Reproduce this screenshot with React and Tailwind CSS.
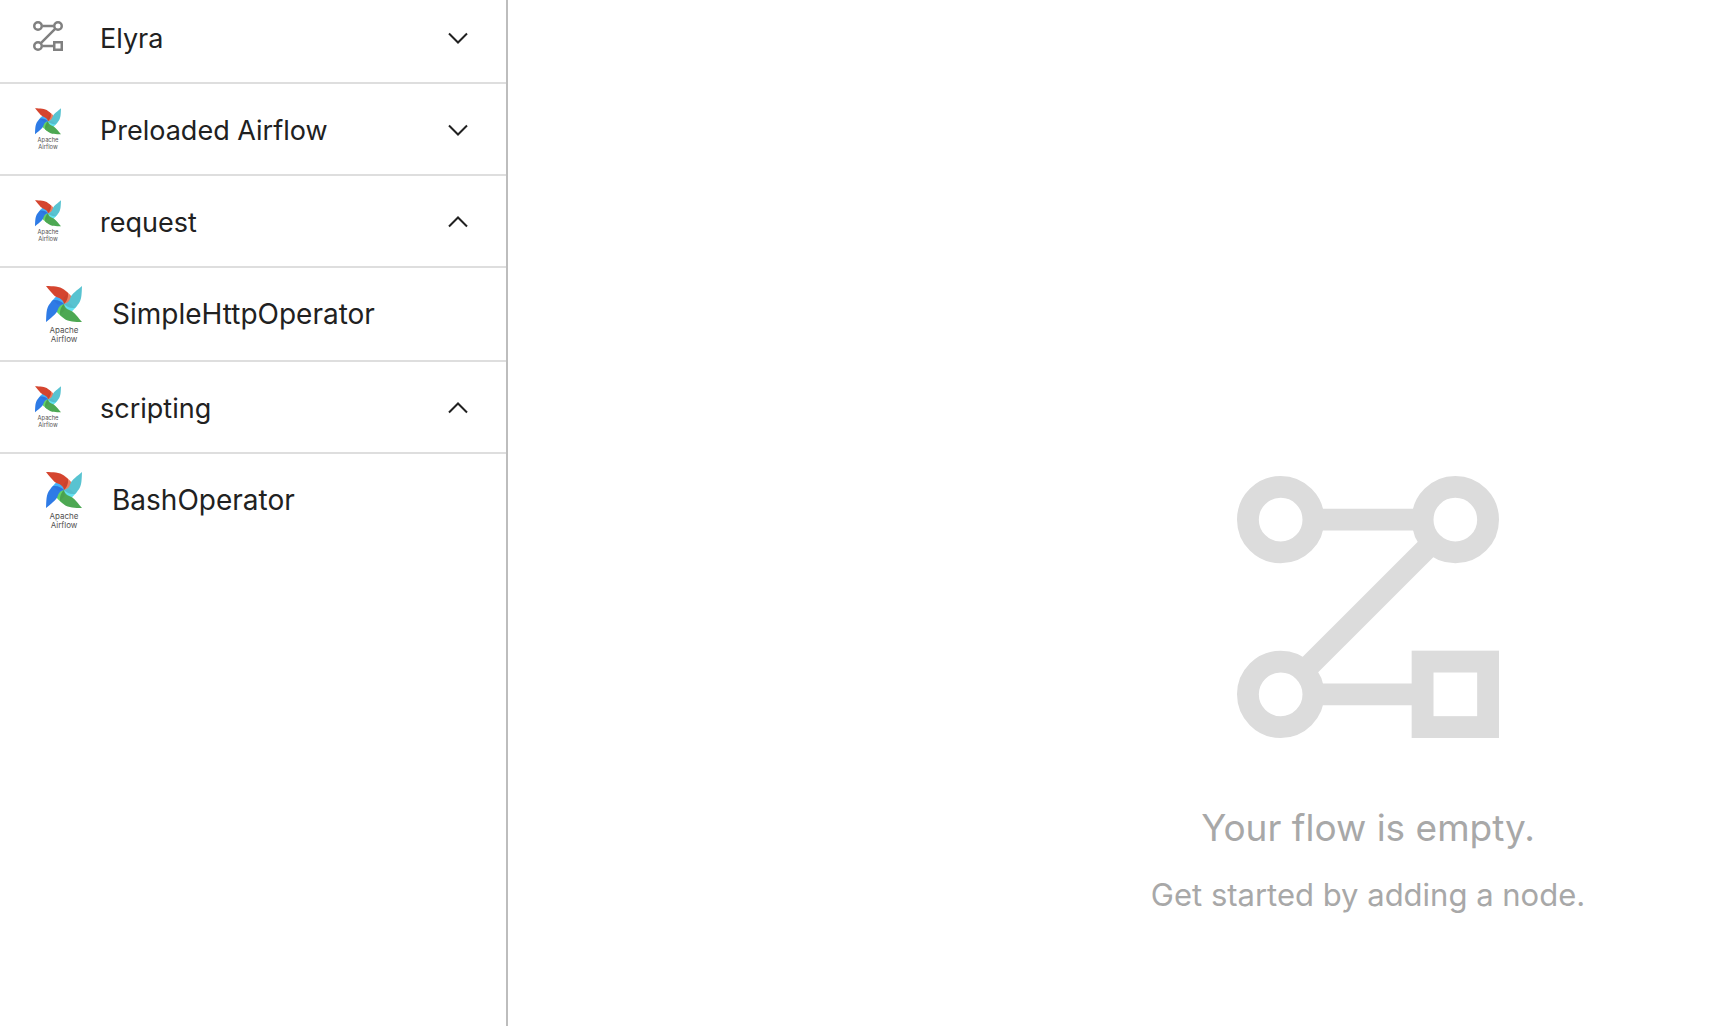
import React, { useState } from "react";

function FlowIcon({ className }) {
  return (
    <svg viewBox="0 0 12 12" className={className} fill="none" stroke="currentColor" aria-hidden="true">
      <circle cx="2" cy="2" r="1.5" />
      <circle cx="10" cy="2" r="1.5" />
      <circle cx="2" cy="10" r="1.5" />
      <rect x="8.5" y="8.5" width="3" height="3" />
      <path d="M3.8 2H8.2M3.8 10H8.2M8.75 3.25 3.25 8.75" />
    </svg>
  );
}

const blades = [
  { turn: "rotate(0 18 18)", main: "#d5452f", light: "#ef7c5f", shade: "#b8402f" },
  { turn: "rotate(90 18 18)", main: "#58c3d1", light: "#63e1f0", shade: "#4fb4c6" },
  { turn: "rotate(180 18 18)", main: "#4da853", light: "#62d467", shade: "#45954c" },
  { turn: "rotate(270 18 18)", main: "#2e7be6", light: "#45b0f8", shade: "#2b6fd0" },
];

function AirflowIcon({ className }) {
  return (
    <svg viewBox="0 0 36 60" className={className} aria-hidden="true">
      {blades.map((b) => (
        <path key={b.turn} transform={b.turn} fill={b.light} d="M19 4.5C22 6.5 24.5 9 26 11L25.5 15.5L18 18.5Z" />
      ))}
      {blades.map((b) => (
        <g key={b.turn} transform={b.turn}>
          <path fill={b.main} d="M0 0C7 .4 13.5 0 18 3.6C19.5 4.8 21 6.2 22 7.2C22.4 12 20.5 15.5 18 18C17.4 15.4 16 13 11.8 11.6C8.5 10.4 7 8.5 0 0Z" />
          <path fill={b.shade} d="M17.5 12C19 10 20.5 8.8 22 7.2C22.4 12 20.5 15.5 18 18C17.9 16 17.6 14 17.5 12Z" opacity=".4" />
        </g>
      ))}
      <g fill="#51504f" fontFamily="Inter, sans-serif" fontSize="8" textAnchor="middle">
        <text x="18" y="47">Apache</text>
        <text x="18" y="56">Airflow</text>
      </g>
    </svg>
  );
}

function Chevron({ open }) {
  return (
    <svg viewBox="0 0 20 12" className="h-3 w-5" fill="none" stroke="#212121" strokeWidth="2" aria-hidden="true">
      <path d={open ? "M1 10.5 10 1.5 19 10.5" : "M1 1.5 10 10.5 19 1.5"} />
    </svg>
  );
}

const initialCategories = [
  { name: "Elyra", open: false, nodes: [] },
  { name: "Preloaded Airflow", open: false, nodes: [] },
  { name: "request", open: true, nodes: ["SimpleHttpOperator"] },
  { name: "scripting", open: true, nodes: ["BashOperator"] },
];

function Category({ category, last, onToggle }) {
  return (
    <li>
      <button
        type="button"
        aria-expanded={category.open}
        onClick={onToggle}
        className="flex h-[92px] w-full items-center border-b-2 border-[#dedede] pl-8 pr-[38px] pt-0.5 text-left text-[27px]"
      >
        <span className="mr-9 flex w-8 justify-center">
          {category.name === "Elyra" ? (
            <span className="pb-1">
              <FlowIcon className="size-[30px] text-[#808080]" />
            </span>
          ) : (
            <AirflowIcon className="h-11 w-[26px]" />
          )}
        </span>
        <span className="flex-1 pt-0.5">{category.name}</span>
        <Chevron open={category.open} />
      </button>
      {category.open && (
        <ul className="text-[28px]">
          {category.nodes.map((node) => (
            <li
              key={node}
              className={
                last
                  ? "flex h-[92px] items-center pl-11"
                  : "flex h-[94px] items-center border-b-2 border-[#dedede] pl-11"
              }
            >
              <span className="mr-7 flex w-10 justify-center pt-1">
                <AirflowIcon className="h-15 w-9" />
              </span>
              <span>{node}</span>
            </li>
          ))}
        </ul>
      )}
    </li>
  );
}

export default function App() {
  const [categories, setCategories] = useState(initialCategories);
  const toggle = (name) =>
    setCategories((list) => list.map((c) => (c.name === name ? { ...c, open: !c.open } : c)));

  return (
    <div className="flex h-screen overflow-hidden bg-white font-['Inter',sans-serif]">
      <aside className="w-[508px] shrink-0 overflow-hidden border-r-2 border-[#bdbdbd] leading-9 text-[#212121]">
        <ul className="-mt-2">
          {categories.map((category, i) => (
            <Category
              key={category.name}
              category={category}
              last={i === categories.length - 1}
              onToggle={() => toggle(category.name)}
            />
          ))}
        </ul>
      </aside>
      <main className="flex w-screen shrink-0 flex-col items-center pt-[476px] text-[#a8a8a8]">
        <FlowIcon className="size-[262px] shrink-0 text-[#dcdcdc]" />
        <h1 className="mt-[66px] text-[37px] leading-[48px]">Your flow is empty.</h1>
        <p className="mt-[23px] text-[31px] leading-10">Get started by adding a node.</p>
      </main>
    </div>
  );
}
